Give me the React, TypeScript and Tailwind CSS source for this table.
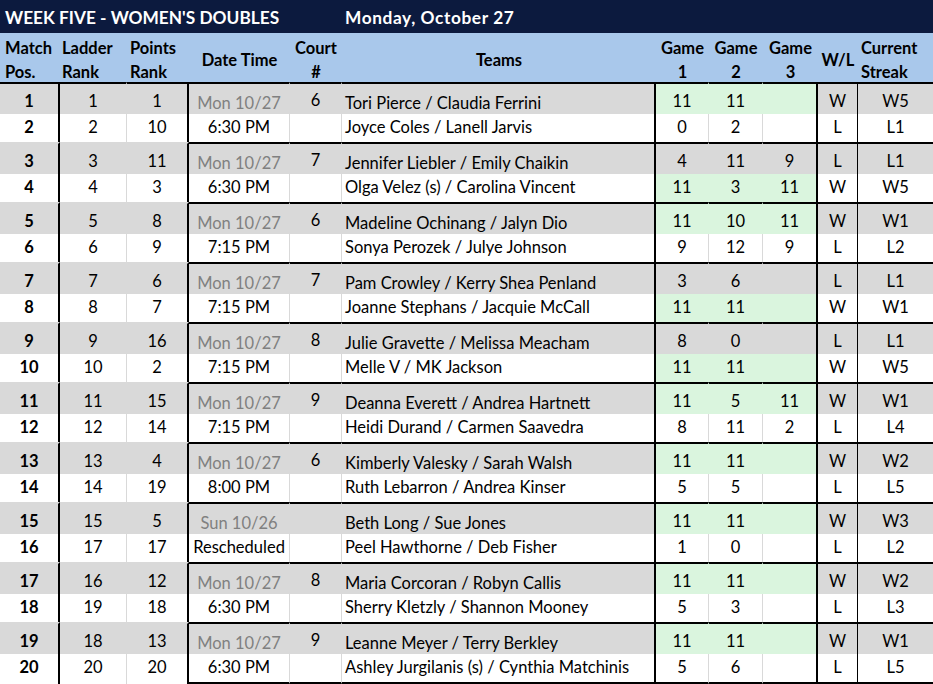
import React from "react";

type Pair = {
    pos: [number, number];
    ladder: [number, number];
    points: [number, number];
    date: string;
    time: string;
    court: string;
    teams: [string, string];
    games: [(number | string)[], (number | string)[]];
    winner: 0 | 1;
    streak: [string, string];
};

const PAIRS: Pair[] = [
    {pos: [1, 2], ladder: [1, 2], points: [1, 10], date: "Mon 10/27", time: "6:30 PM", court: "6", teams: ["Tori Pierce / Claudia Ferrini", "Joyce Coles / Lanell Jarvis"], games: [[11, 11, ""], [0, 2, ""]], winner: 0, streak: ["W5", "L1"]},
    {pos: [3, 4], ladder: [3, 4], points: [11, 3], date: "Mon 10/27", time: "6:30 PM", court: "7", teams: ["Jennifer Liebler / Emily Chaikin", "Olga Velez (s) / Carolina Vincent"], games: [[4, 11, 9], [11, 3, 11]], winner: 1, streak: ["L1", "W5"]},
    {pos: [5, 6], ladder: [5, 6], points: [8, 9], date: "Mon 10/27", time: "7:15 PM", court: "6", teams: ["Madeline Ochinang / Jalyn Dio", "Sonya Perozek / Julye Johnson"], games: [[11, 10, 11], [9, 12, 9]], winner: 0, streak: ["W1", "L2"]},
    {pos: [7, 8], ladder: [7, 8], points: [6, 7], date: "Mon 10/27", time: "7:15 PM", court: "7", teams: ["Pam Crowley / Kerry Shea Penland", "Joanne Stephans / Jacquie McCall"], games: [[3, 6, ""], [11, 11, ""]], winner: 1, streak: ["L1", "W1"]},
    {pos: [9, 10], ladder: [9, 10], points: [16, 2], date: "Mon 10/27", time: "7:15 PM", court: "8", teams: ["Julie Gravette / Melissa Meacham", "Melle V / MK Jackson"], games: [[8, 0, ""], [11, 11, ""]], winner: 1, streak: ["L1", "W5"]},
    {pos: [11, 12], ladder: [11, 12], points: [15, 14], date: "Mon 10/27", time: "7:15 PM", court: "9", teams: ["Deanna Everett / Andrea Hartnett", "Heidi Durand / Carmen Saavedra"], games: [[11, 5, 11], [8, 11, 2]], winner: 0, streak: ["W1", "L4"]},
    {pos: [13, 14], ladder: [13, 14], points: [4, 19], date: "Mon 10/27", time: "8:00 PM", court: "6", teams: ["Kimberly Valesky / Sarah Walsh", "Ruth Lebarron / Andrea Kinser"], games: [[11, 11, ""], [5, 5, ""]], winner: 0, streak: ["W2", "L5"]},
    {pos: [15, 16], ladder: [15, 17], points: [5, 17], date: "Sun 10/26", time: "Rescheduled", court: "", teams: ["Beth Long / Sue Jones", "Peel Hawthorne / Deb Fisher"], games: [[11, 11, ""], [1, 0, ""]], winner: 0, streak: ["W3", "L2"]},
    {pos: [17, 18], ladder: [16, 19], points: [12, 18], date: "Mon 10/27", time: "6:30 PM", court: "8", teams: ["Maria Corcoran / Robyn Callis", "Sherry Kletzly / Shannon Mooney"], games: [[11, 11, ""], [5, 3, ""]], winner: 0, streak: ["W2", "L3"]},
    {pos: [19, 20], ladder: [18, 20], points: [13, 20], date: "Mon 10/27", time: "6:30 PM", court: "9", teams: ["Leanne Meyer / Terry Berkley", "Ashley Jurgilanis (s) / Cynthia Matchinis"], games: [[11, 11, ""], [5, 6, ""]], winner: 0, streak: ["W1", "L5"]},
];

const LIGHT = "border-r border-r-[#d9d9d9]";
const GREEN_LINE = "border-r border-r-[#daf5de]";
const BLACK2 = "border-r-2 border-r-black";

function Row({p, i, last}: {p: Pair; i: 0 | 1; last: boolean}) {
    const gray = i === 0;
    const first = p.pos[0] === 1;
    const bg = gray ? "bg-[#d9d9d9]" : "bg-white";
    const green = p.winner === i;
    const gbg = green ? "bg-[#daf5de]" : bg;
    // gray rows carry the 2px pair divider; it's hidden under the left block
    const topL = gray ? (first ? "border-t-2 border-t-black" : "border-t-2 border-t-[#d9d9d9]") : "";
    const topR = gray ? "border-t-2 border-t-black" : "";
    const closing = last && !gray;
    const h = gray ? "h-[32px]" : closing ? "h-[30px]" : "h-[28px]";
    const pb = gray ? "pb-[3px]" : "pb-[5px]";
    const pbT = gray ? "pb-[1px]" : "pb-[5px]";
    const bottom = closing ? "border-b-2 border-b-black" : "";
    const g = p.games[i];

    return (
        <div className={`flex ${h} leading-[20px]`}>
            <div className={`w-[60px] ${BLACK2} ${topL} ${bg} ${closing ? "pb-[7px]" : pb} flex items-end justify-center font-bold`}>{p.pos[i]}</div>
            <div className={`w-[67px] ${LIGHT} ${topL} ${bg} ${closing ? "pb-[7px]" : pb} flex items-end justify-center`}>{p.ladder[i]}</div>
            <div className={`w-[62px] ${BLACK2} ${topL} ${bg} ${closing ? "pb-[7px]" : pb} flex items-end justify-center`}>{p.points[i]}</div>
            <div className={`w-[101px] ${LIGHT} ${topR} ${bottom} ${bg} ${pbT} flex items-end justify-center ${gray ? "text-[#808080]" : ""}`}>
                {gray ? p.date : p.time}
            </div>
            <div className={`w-[52px] ${LIGHT} ${topR} ${bottom} ${bg} ${gray ? "pb-[4px]" : pb} flex items-end justify-center`}>{gray ? p.court : ""}</div>
            <div className={`w-[314px] ${BLACK2} ${topR} ${bottom} ${bg} ${pbT} pl-[3px] flex items-end whitespace-nowrap`}>{p.teams[i]}</div>
            <div className={`w-[53px] ${green ? GREEN_LINE : LIGHT} ${topR} ${bottom} ${gbg} ${pb} flex items-end justify-center`}>{g[0]}</div>
            <div className={`w-[54px] ${green ? GREEN_LINE : LIGHT} ${topR} ${bottom} ${gbg} ${pb} flex items-end justify-center`}>{g[1]}</div>
            <div className={`w-[55px] ${BLACK2} ${topR} ${bottom} ${gbg} ${pb} flex items-end justify-center`}>{g[2]}</div>
            <div className={`w-[40px] border-r border-r-black ${topR} ${bottom} ${bg} ${pb} flex items-end justify-center`}>{green ? "W" : "L"}</div>
            <div className={`w-[75px] ${topR} ${bottom} ${bg} ${pb} flex items-end justify-center`}>{p.streak[i]}</div>
        </div>
    );
}

export default function App() {
    return (
        <div className="w-[933px] h-[684px] overflow-hidden bg-white text-black font-['Lato',sans-serif] text-[16.5px]">
            {/* title bar */}
            <div className="h-[33px] bg-[#0c1a3e] text-white font-bold text-[17.3px] flex items-center pt-[3px]">
                <span className="w-[345px] pl-[5px]">WEEK FIVE - WOMEN'S DOUBLES</span>
                <span className="tracking-[0.6px]">Monday, October 27</span>
            </div>

            {/* header */}
            <div className="h-[49px] bg-[#a9c8eb] flex font-bold leading-[24px] pt-[5px]">
                <div className="w-[60px] pl-[5px] flex flex-col justify-center"><span>Match</span><span>Pos.</span></div>
                <div className="w-[67px] pl-[2px] flex flex-col justify-center"><span>Ladder</span><span>Rank</span></div>
                <div className="w-[62px] pl-[3px] flex flex-col justify-center"><span>Points</span><span>Rank</span></div>
                <div className="w-[101px] flex items-center justify-center">Date Time</div>
                <div className="w-[52px] flex flex-col items-center justify-center"><span>Court</span><span>#</span></div>
                <div className="w-[314px] flex items-center justify-center">Teams</div>
                <div className="w-[53px] flex flex-col items-center justify-center"><span>Game</span><span>1</span></div>
                <div className="w-[54px] flex flex-col items-center justify-center"><span>Game</span><span>2</span></div>
                <div className="w-[55px] flex flex-col items-center justify-center"><span>Game</span><span>3</span></div>
                <div className="w-[40px] flex items-center justify-center">W/L</div>
                <div className="w-[75px] pl-[3px] flex flex-col justify-center"><span>Current</span><span>Streak</span></div>
            </div>

            {/* match rows */}
            {PAIRS.map((p, idx) => (
                <div key={p.pos[0]}>
                    <Row p={p} i={0} last={idx === PAIRS.length - 1}/>
                    <Row p={p} i={1} last={idx === PAIRS.length - 1}/>
                </div>
            ))}
        </div>
    );
}
